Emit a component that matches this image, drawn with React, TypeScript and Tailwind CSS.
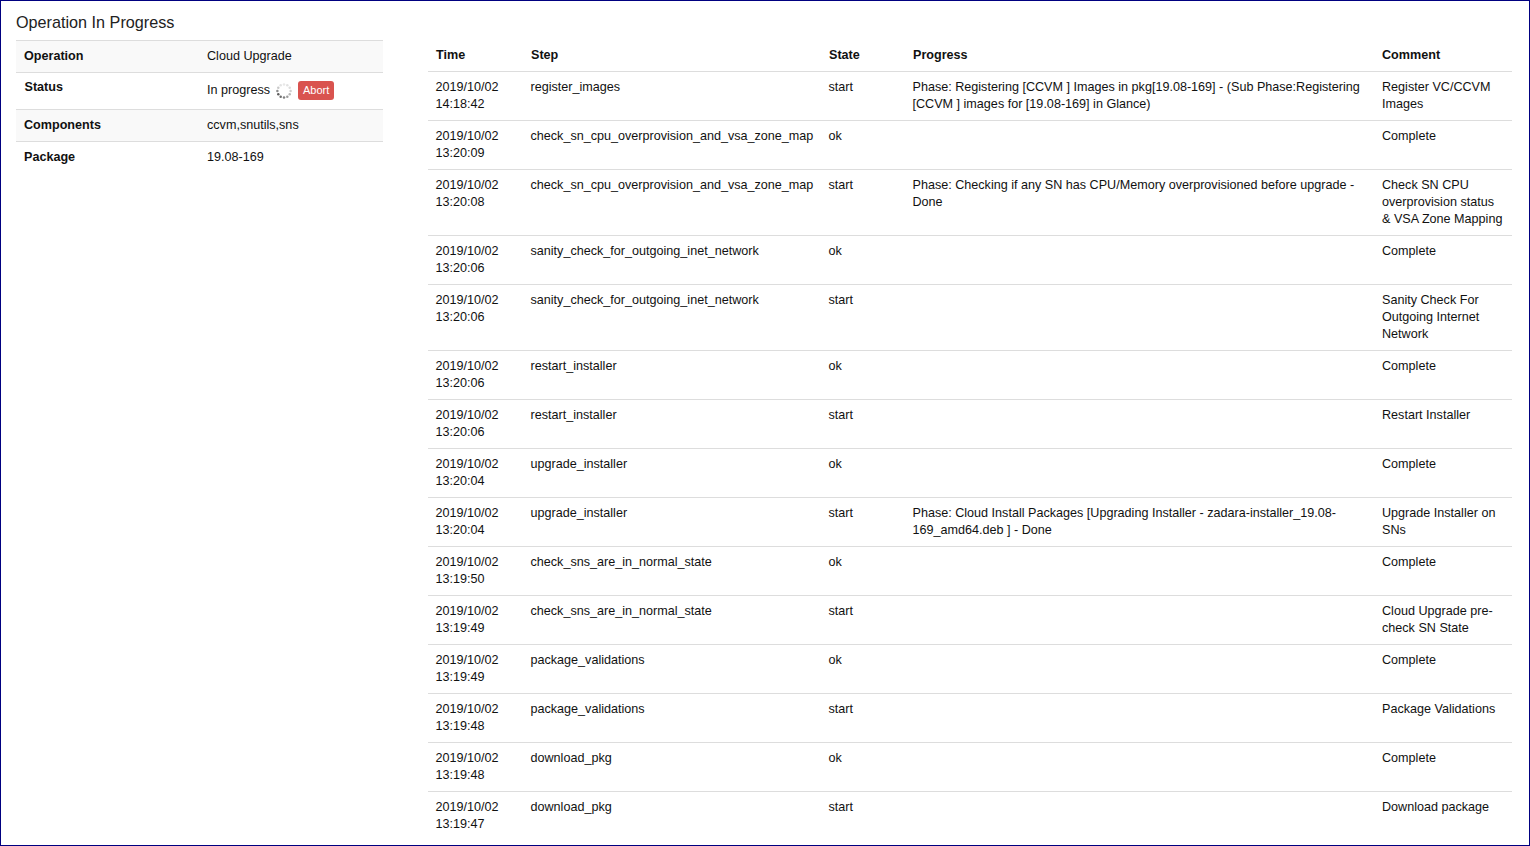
const rows = [
  ["2019/10/02 14:18:42", "register_images", "start", "Phase: Registering [CCVM ] Images in pkg[19.08-169] - (Sub Phase:Registering [CCVM ] images for [19.08-169] in Glance)", "Register VC/CCVM Images"],
  ["2019/10/02 13:20:09", "check_sn_cpu_overprovision_and_vsa_zone_map", "ok", "", "Complete"],
  ["2019/10/02 13:20:08", "check_sn_cpu_overprovision_and_vsa_zone_map", "start", "Phase: Checking if any SN has CPU/Memory overprovisioned before upgrade - Done", "Check SN CPU overprovision status & VSA Zone Mapping"],
  ["2019/10/02 13:20:06", "sanity_check_for_outgoing_inet_network", "ok", "", "Complete"],
  ["2019/10/02 13:20:06", "sanity_check_for_outgoing_inet_network", "start", "", "Sanity Check For Outgoing Internet Network"],
  ["2019/10/02 13:20:06", "restart_installer", "ok", "", "Complete"],
  ["2019/10/02 13:20:06", "restart_installer", "start", "", "Restart Installer"],
  ["2019/10/02 13:20:04", "upgrade_installer", "ok", "", "Complete"],
  ["2019/10/02 13:20:04", "upgrade_installer", "start", "Phase: Cloud Install Packages [Upgrading Installer - zadara-installer_19.08-169_amd64.deb ] - Done", "Upgrade Installer on SNs"],
  ["2019/10/02 13:19:50", "check_sns_are_in_normal_state", "ok", "", "Complete"],
  ["2019/10/02 13:19:49", "check_sns_are_in_normal_state", "start", "", "Cloud Upgrade pre-check SN State"],
  ["2019/10/02 13:19:49", "package_validations", "ok", "", "Complete"],
  ["2019/10/02 13:19:48", "package_validations", "start", "", "Package Validations"],
  ["2019/10/02 13:19:48", "download_pkg", "ok", "", "Complete"],
  ["2019/10/02 13:19:47", "download_pkg", "start", "", "Download package"],
];

const dots = [0, 30, 60, 90, 120, 150, 180, 210, 240, 270, 300, 330];
const dotColors = ["#e8e8e8", "#e2e2e2", "#dcdcdc", "#d0d0d0", "#b8b8b8", "#9c9c9c", "#808080", "#6c6c6c", "#5c5c5c", "#8c8c8c", "#c8c8c8", "#e4e4e4"];

function Spinner() {
  return (
    <svg width="16" height="16" viewBox="0 0 16 16" className="ml-[6px]">
      {dots.map((a, i) => (
        <circle
          key={a}
          cx={8 + 6.6 * Math.sin((a * Math.PI) / 180)}
          cy={8 - 6.6 * Math.cos((a * Math.PI) / 180)}
          r="1.25"
          fill={dotColors[i]}
        />
      ))}
    </svg>
  );
}

export default function App() {
  return (
    <div className="h-[846px] overflow-hidden bg-white border border-[#000080] text-[12.6px] leading-[17px] text-[#111] font-['Liberation_Sans',Arial,sans-serif]">
      <h3 className="ml-[15px] mt-[11px] h-[28px] text-[16.2px] leading-[20px] text-[#222]">
        Operation In Progress
      </h3>
      <div className="flex">
        <div className="ml-[15px] w-[367px] shrink-0">
          <div className="flex h-[32px] bg-[#f9f9f9] border-t border-[#ddd] pt-[7px]">
            <div className="w-[191px] pl-2 font-bold">Operation</div>
            <div>Cloud Upgrade</div>
          </div>
          <div className="flex h-[37px] border-t border-[#ddd]">
            <div className="w-[191px] pl-[8.5px] pt-[6px] font-bold">Status</div>
            <div className="flex items-center h-[35px]">
              <span>In progress</span>
              <Spinner />
              <span className="ml-[6px] h-[19px] px-[5px] rounded-[3px] bg-[#d9534f] text-white text-[11px] leading-[19px]">
                Abort
              </span>
            </div>
          </div>
          <div className="flex h-[32px] bg-[#f9f9f9] border-t border-[#ddd] pt-[7px]">
            <div className="w-[191px] pl-2 font-bold">Components</div>
            <div>ccvm,snutils,sns</div>
          </div>
          <div className="flex h-[32px] border-t border-[#ddd] pt-[7px]">
            <div className="w-[191px] pl-2 font-bold">Package</div>
            <div>19.08-169</div>
          </div>
        </div>
        <div className="ml-[45px] w-[1084px] shrink-0">
          <table className="w-full table-fixed border-collapse">
            <colgroup>
              <col className="w-[95px]" />
              <col className="w-[298px]" />
              <col className="w-[84px]" />
              <col className="w-[469px]" />
              <col className="w-[138px]" />
            </colgroup>
            <thead>
              <tr className="border-b border-[#ddd] text-left align-top">
                <th className="pl-2 pr-2 pt-[7px] h-[31px] font-bold">Time</th>
                <th className="pl-2 pr-2 pt-[7px] h-[31px] font-bold">Step</th>
                <th className="pl-2 pr-2 pt-[7px] h-[31px] font-bold">State</th>
                <th className="pl-2 pr-2 pt-[7px] h-[31px] font-bold">Progress</th>
                <th className="pl-2 pr-2 pt-[7px] h-[31px] font-bold">Comment</th>
              </tr>
            </thead>
            <tbody>
              {rows.map((r, i) => (
                <tr key={i} className="border-b border-[#ddd] last:border-0 align-top">
                  <td className="pl-[7.5px] pr-2 py-[7px]">{r[0]}</td>
                  <td className="pl-[7.5px] pr-1 py-[7px] whitespace-nowrap">{r[1]}</td>
                  <td className="pl-[7.5px] pr-1 py-[7px]">{r[2]}</td>
                  <td className="pl-[7.5px] pr-2 py-[7px]">{r[3]}</td>
                  <td className="pl-[8px] pr-2 py-[7px]">{r[4]}</td>
                </tr>
              ))}
            </tbody>
          </table>
        </div>
      </div>
    </div>
  );
}
